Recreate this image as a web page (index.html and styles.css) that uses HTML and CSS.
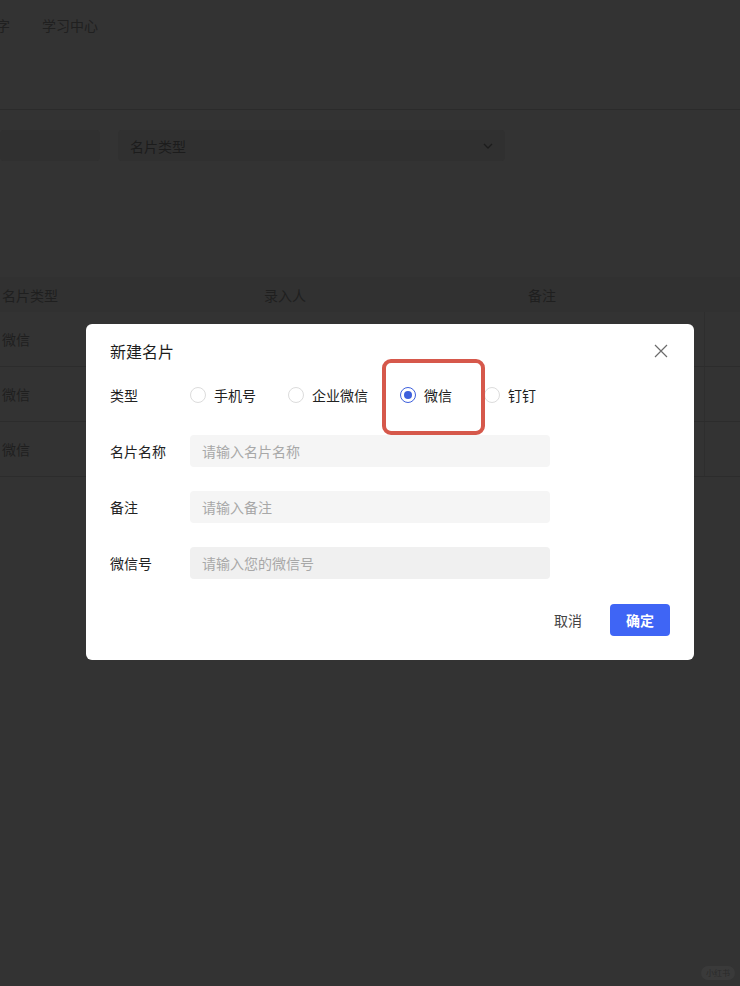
FILE: index.html
```html
<!DOCTYPE html>
<html lang="zh-CN">
<head>
<meta charset="utf-8">
<title>新建名片</title>
<link rel="stylesheet" href="styles.css">
</head>
<body>
<div class="page">
  <div class="header">
    <div class="nav">
      <span class="nav-item first">数字</span>
      <span class="nav-item">学习中心</span>
    </div>
  </div>
  <div class="filters">
    <div class="filter-box left"></div>
    <div class="filter-box select">
      <span>名片类型</span>
      <svg class="chev" width="10" height="6" viewBox="0 0 10 6"><path d="M1 1l4 4 4-4" fill="none" stroke="#1c1c1c" stroke-width="1.3"/></svg>
    </div>
  </div>
  <div class="table">
    <div class="tr th">
      <div class="c1">名片类型</div><div class="c2">录入人</div><div class="c3">备注</div>
    </div>
    <div class="tr"><div class="c1">微信</div><div class="c2"></div><div class="c3"></div><div class="c4"></div></div>
    <div class="tr"><div class="c1">微信</div><div class="c2"></div><div class="c3"></div><div class="c4"></div></div>
    <div class="tr"><div class="c1">微信</div><div class="c2"></div><div class="c3"></div><div class="c4"></div></div>
  </div>
  <div class="watermark">小红书</div>
</div>

<div class="modal">
  <div class="modal-head">
    <div class="modal-title">新建名片</div>
    <svg class="close" width="14" height="14" viewBox="0 0 14 14"><path d="M1 1l12 12M13 1L1 13" stroke="#6b6b6b" stroke-width="1.2" fill="none"/></svg>
  </div>
  <div class="form">
    <div class="row">
      <div class="label">类型</div>
      <div class="radios">
        <label class="radio"><span class="dot"></span>手机号</label>
        <label class="radio"><span class="dot"></span>企业微信</label>
        <label class="radio checked"><span class="dot"></span>微信</label>
        <label class="radio"><span class="dot"></span>钉钉</label>
      </div>
    </div>
    <div class="row">
      <div class="label">名片名称</div>
      <div class="input">请输入名片名称</div>
    </div>
    <div class="row">
      <div class="label">备注</div>
      <div class="input">请输入备注</div>
    </div>
    <div class="row">
      <div class="label">微信号</div>
      <div class="input alt">请输入您的微信号</div>
    </div>
  </div>
  <div class="footer">
    <span class="cancel">取消</span>
    <span class="ok">确定</span>
  </div>
  <div class="highlight"></div>
</div>
</body>
</html>
```

FILE: styles.css
```css
* { box-sizing: border-box; }
html, body { margin: 0; padding: 0; }
body {
  width: 740px;
  height: 986px;
  overflow: hidden;
  background: #333333;
  font-family: "Noto Sans CJK SC", "Noto Sans", sans-serif;
  font-size: 14px;
  color: #1f1f1f;
  position: relative;
}
.page { width: 740px; height: 986px; position: relative; }
.header {
  height: 110px;
  border-bottom: 1px solid #2b2b2b;
}
.nav {
  display: flex;
  gap: 32px;
  padding-top: 14px;
  line-height: 22px;
  color: #202020;
}
.nav-item.first { margin-left: -18px; }
.filters {
  display: flex;
  gap: 18px;
  margin-top: 20px;
  height: 31px;
}
.filter-box {
  height: 31px;
  background: #303030;
  border-radius: 4px;
}
.filter-box.left { width: 100px; }
.select {
  width: 387px;
  display: flex;
  align-items: center;
  justify-content: space-between;
  padding: 0 12px;
  color: #1c1c1c;
}
.table { margin-top: 116px; }
.tr {
  display: flex;
  height: 55px;
  align-items: center;
  border-bottom: 1px solid #2c2c2c;
}
.tr.th { height: 35px; background: #313131; border-bottom: none; }
.c1 { width: 264px; padding-left: 2px; }
.c2 { width: 264px; }
.c3 { width: 176px; }
.c4 { flex: 1; align-self: stretch; border-left: 1px solid #2e2e2e; }
.watermark {
  position: absolute;
  right: 5px;
  bottom: 6px;
  font-size: 8px;
  color: #2a2a2a;
  background: #3a3a3a;
  border-radius: 7px;
  padding: 1px 5px;
  line-height: 12px;
}

.modal {
  position: absolute;
  left: 86px;
  top: 324px;
  width: 608px;
  height: 336px;
  background: #ffffff;
  border-radius: 6px;
  padding: 16px 24px 24px;
  display: flex;
  flex-direction: column;
}
.modal-head {
  display: flex;
  justify-content: space-between;
  align-items: center;
  height: 22px;
}
.modal-title { font-size: 16px; line-height: 22px; color: #1d1d1d; }
.close { margin-right: 2px; }
.form {
  display: flex;
  flex-direction: column;
  gap: 24px;
  margin-top: 17px;
}
.row { display: flex; align-items: center; height: 32px; }
.label { width: 80px; color: #222; }
.radios { display: flex; gap: 32px; align-items: center; }
.radio { display: flex; align-items: center; gap: 8px; color: #222; }
.dot {
  width: 16px;
  height: 16px;
  border-radius: 50%;
  border: 1px solid #dcdcdc;
  background: #fff;
  position: relative;
}
.radio.checked .dot { border-color: #3d5fdc; }
.radio.checked .dot::after {
  content: "";
  position: absolute;
  left: 3px;
  top: 3px;
  width: 8px;
  height: 8px;
  border-radius: 50%;
  background: #3d5fdc;
}
.input {
  width: 360px;
  height: 32px;
  background: #f5f5f5;
  border-radius: 4px;
  padding-left: 12px;
  display: flex;
  align-items: center;
  color: #a8a8a8;
}
.input.alt { background: #f0f0f0; }
.footer {
  margin-top: 25px;
  display: flex;
  justify-content: flex-end;
  align-items: center;
  gap: 28px;
}
.cancel { color: #444; }
.ok {
  width: 60px;
  height: 32px;
  border-radius: 4px;
  background: #3f65f5;
  color: #fff;
  font-weight: 700;
  display: flex;
  align-items: center;
  justify-content: center;
}
.highlight {
  position: absolute;
  left: 296px;
  top: 35px;
  width: 103px;
  height: 76px;
  border: 4px solid #d6584b;
  border-radius: 9px;
}
```
